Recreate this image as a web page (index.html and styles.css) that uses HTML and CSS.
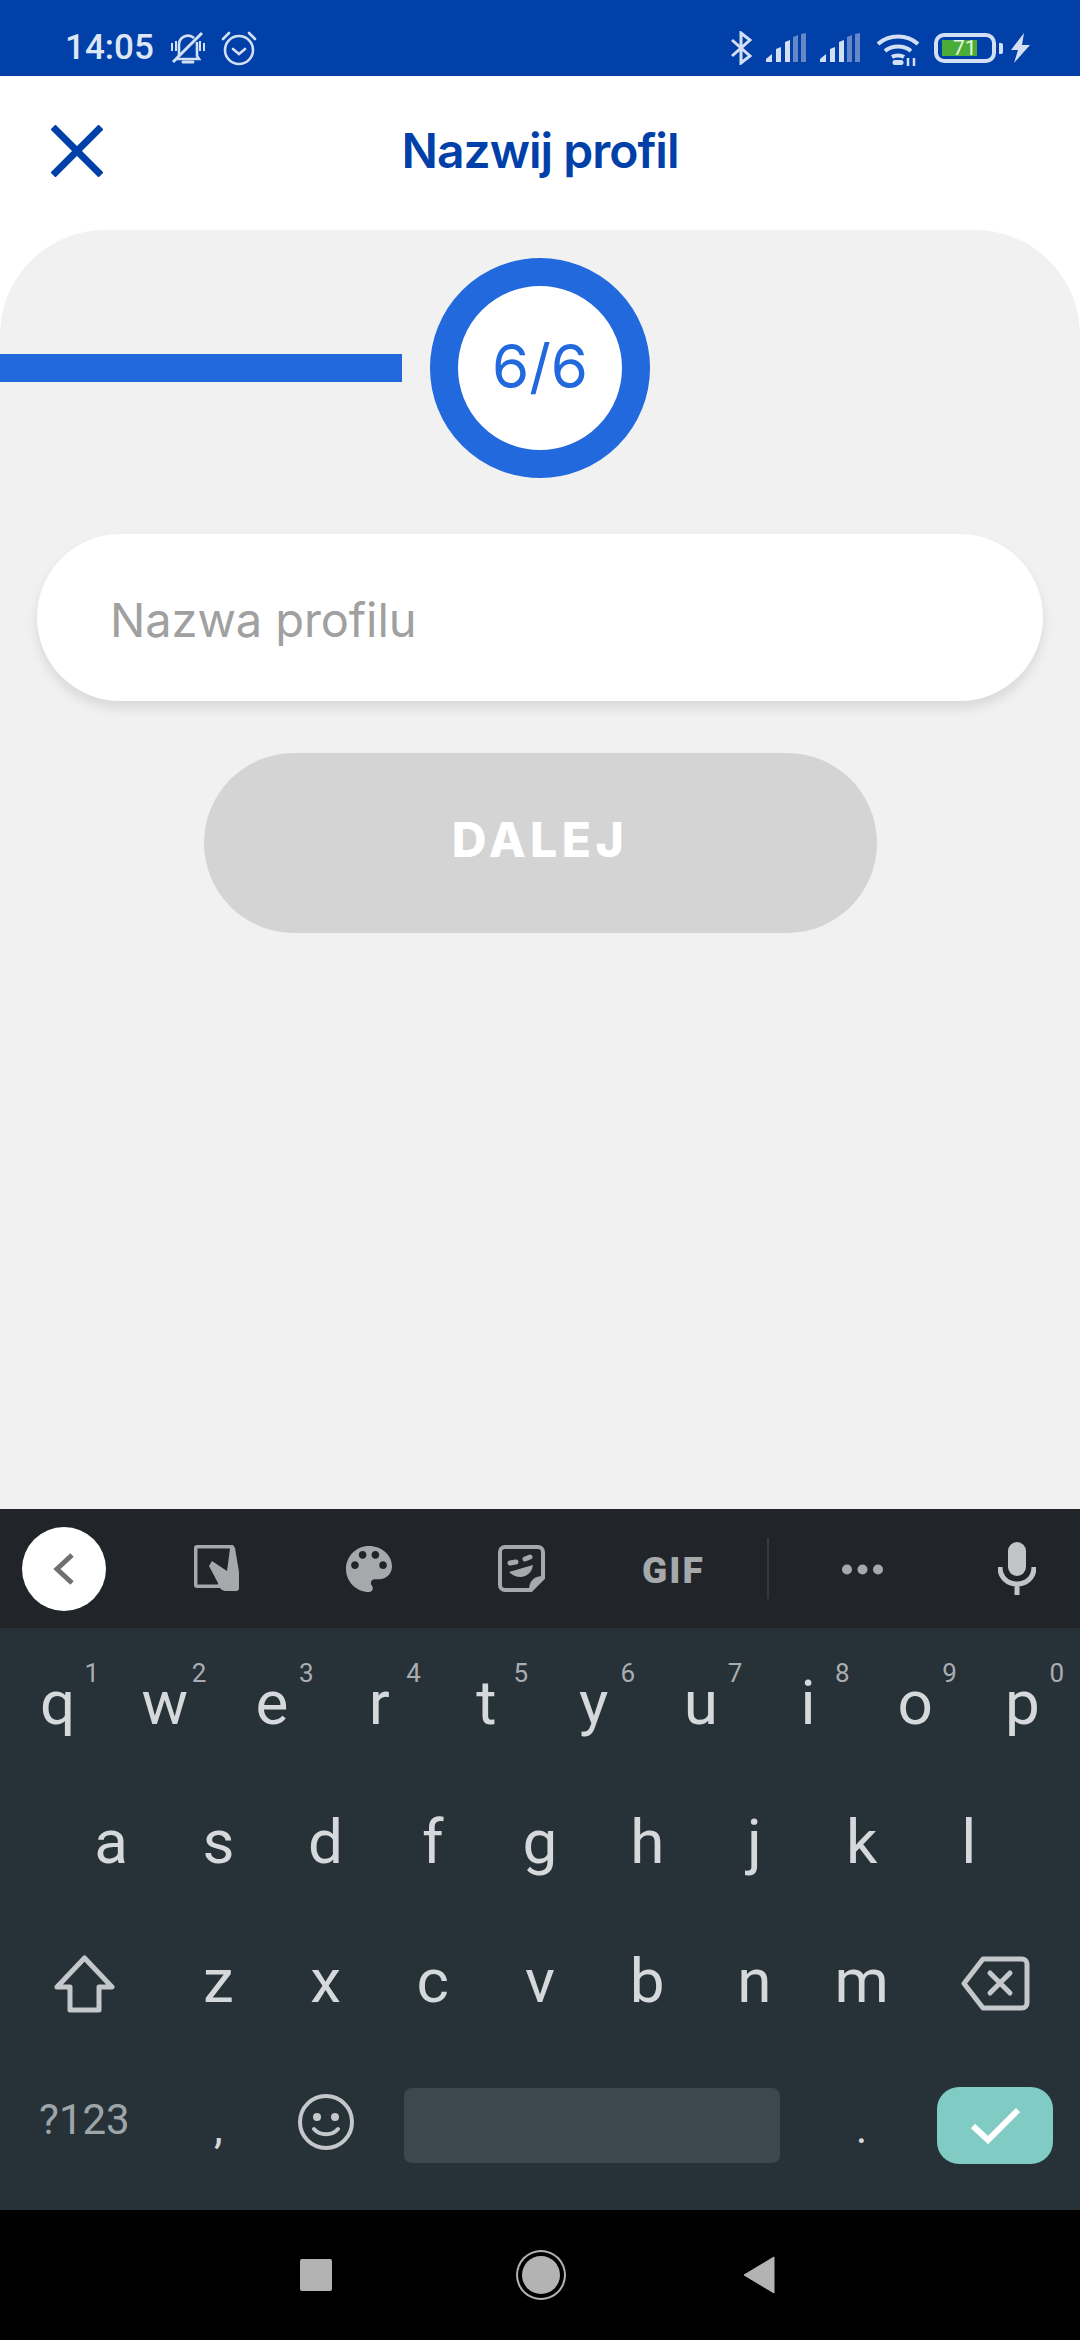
FILE: index.html
```html
<!DOCTYPE html>
<html><head>
<meta charset="utf-8">
<title>Nazwij profil</title>
<link rel="stylesheet" href="styles.css">
</head>
<body>
<div class="phone">
	<div class="status">
		<span class="clock">14:05</span>
		<svg class="ic-bell" width="34" height="34" viewBox="0 0 34 34" fill="none" stroke="#d3dff4" stroke-width="2.6"><path d="M8 25V14a9 9 0 0 1 15-7M26 11v14l2 3H5"/><path d="M12 31h10" stroke-width="3" stroke-linecap="round"/><path d="M1 12v8M5 10v10M29 10v10M33 12v8" stroke-width="2"/><path d="M2 31 31 2" stroke-width="3"/></svg>
		<svg class="ic-alarm" width="36" height="35" viewBox="0 0 36 35" fill="none" stroke="#d3dff4" stroke-width="2.6"><circle cx="18" cy="19" r="14"/><path d="M12 18l6 5 6-5M2 8l6-6M34 8l-6-6" stroke-linecap="round"/></svg>
		<span class="status-space"></span>
		<svg class="ic-bt" width="21" height="34" viewBox="0 0 21 34" fill="none" stroke="#d3dff4" stroke-width="3"><path d="M1 9l18 16-9 7V2l9 7L1 25"/></svg>
		<svg class="ic-sig" width="40" height="29" viewBox="0 0 40 29"><path d="M0 29v-3l6-5v8z" fill="#d3dff4"/><path d="M10 29V16l5-2v15zM19 29V9l5-2v22z" fill="#d3dff4"/><path d="M27 29V4l5-2v27zM35 29V1l5-1v29z" fill="#6688c9"/></svg>
		<svg class="ic-sig" width="40" height="29" viewBox="0 0 40 29"><path d="M0 29v-3l6-5v8z" fill="#d3dff4"/><path d="M10 29V16l5-2v15zM19 29V9l5-2v22z" fill="#d3dff4"/><path d="M27 29V4l5-2v27zM35 29V1l5-1v29z" fill="#6688c9"/></svg>
		<svg class="ic-wifi" width="44" height="33" viewBox="0 0 44 33" fill="none" stroke="#d3dff4" stroke-width="4"><path d="M2 11c11-10 29-10 40 0M9 18c7-6 19-6 26 0M16 24c3-2 9-2 12 0"/><path d="M19 29.500h6" stroke-width="5" stroke-linecap="round"/><path d="M32 25v8M38 25v8" stroke-width="2.500"/></svg>
		<div class="battery"><div class="battery-fill"></div><span class="battery-num">71</span></div>
		<span class="battery-nub"></span>
		<svg class="ic-bolt" width="19" height="30" viewBox="0 0 19 30"><path d="M13 0 0 17h7L3 30 19 12h-8z" fill="#d3dff4"/></svg>
	</div>

	<div class="appbar">
		<svg class="close" width="52" height="52" viewBox="0 0 52 52" fill="none" stroke="#0040a8" stroke-width="7"><path d="M2 2l48 48M50 2 2 50"/></svg>
		<h1>Nazwij profil</h1>
	</div>

	<div class="panel">
		<div class="progress">
			<div class="progress-bar"></div>
			<div class="progress-ring">6/6</div>
		</div>
		<div class="field">Nazwa profilu</div>
		<div class="next">DALEJ</div>
	</div>

	<div class="kb-tools">
		<div class="kb-back"><svg width="22" height="34" viewBox="0 0 22 34" fill="none" stroke="#6f6f6f" stroke-width="5"><path d="M19 3 4 17l15 14"/></svg></div>
		<svg class="t-clip" width="46" height="47" viewBox="0 0 46 47"><path d="M3 0H39L41 3 45 27V43Q45 46 42 46H31Q28 46 26 43H3Q0 43 0 40V3Q0 0 3 0z" fill="#a5a9ac"/><path d="M3.500 3.500H36L33 26 18 16 15 21 24 38V39.500H3.500z" fill="#212529"/></svg>
		<svg class="t-palette" width="46" height="46" viewBox="3 3 18 18"><path fill="#a5a9ac" d="M12 3c-4.970 0-9 4.030-9 9s4.030 9 9 9c.83 0 1.500-.67 1.500-1.500 0-.39-.15-.74-.39-1.010-.23-.26-.38-.61-.38-.99 0-.83.67-1.500 1.500-1.500H16c2.760 0 5-2.240 5-5 0-4.420-4.030-8-9-8zm-5.500 9c-.83 0-1.500-.67-1.500-1.500S5.670 9 6.500 9 8 9.670 8 10.500 7.330 12 6.500 12zm3-4C8.670 8 8 7.330 8 6.500S8.670 5 9.500 5s1.500.67 1.500 1.500S10.330 8 9.500 8zm5 0c-.83 0-1.500-.67-1.500-1.500S13.670 5 14.500 5s1.500.67 1.500 1.500S15.330 8 14.500 8zm3 4c-.83 0-1.500-.67-1.500-1.500S16.670 9 17.500 9s1.500.67 1.500 1.500-.67 1.500-1.500 1.500z"/></svg>
		<svg class="t-sticker" width="47" height="47" viewBox="0 0 47 47"><path d="M7 2H40a5 5 0 0 1 5 5V33L33 45H7a5 5 0 0 1-5-5V7a5 5 0 0 1 5-5z" fill="none" stroke="#a5a9ac" stroke-width="4"/><path d="M31 45c0-9 5-14 14-14z" fill="#a5a9ac"/><path d="M11 27 35 20c-1 7-5 11-12 12-5 0-9-2-12-5z" fill="#a5a9ac"/><path d="M12 18l6-1M27 14l5-2" stroke="#a5a9ac" stroke-width="5" stroke-linecap="round"/></svg>
		<span class="t-gif">GIF</span>
		<span class="t-sep"></span>
		<svg class="t-dots" width="41" height="11" viewBox="0 0 41 11" fill="#a5a9ac"><circle cx="5" cy="5.500" r="5"/><circle cx="20.500" cy="5.500" r="5"/><circle cx="36" cy="5.500" r="5"/></svg>
		<svg class="t-mic" width="38" height="53" viewBox="0 0 38 53"><rect x="10" y="0" width="18" height="34" rx="9" fill="#c2c5c8"/><path d="M2 25c0 11 8 17 17 17s17-6 17-17M19 42v11" fill="none" stroke="#c2c5c8" stroke-width="5"/></svg>
	</div>

	<div class="kb">
		<div class="kb-row">
			<div class="key">q<sup>1</sup></div><div class="key">w<sup>2</sup></div><div class="key">e<sup>3</sup></div><div class="key">r<sup>4</sup></div><div class="key">t<sup>5</sup></div><div class="key">y<sup>6</sup></div><div class="key">u<sup>7</sup></div><div class="key">i<sup>8</sup></div><div class="key">o<sup>9</sup></div><div class="key">p<sup>0</sup></div>
		</div>
		<div class="kb-row row-mid">
			<div class="key">a</div><div class="key">s</div><div class="key">d</div><div class="key">f</div><div class="key">g</div><div class="key">h</div><div class="key">j</div><div class="key">k</div><div class="key">l</div>
		</div>
		<div class="kb-row">
			<div class="key wide"><svg class="kb-ic" width="61" height="58" viewBox="0 0 61 58" fill="none" stroke="#c4c8cb" stroke-width="5" stroke-linejoin="round"><path d="M30.500 3 58 32H45V55H16V32H3z"/></svg></div>
			<div class="key">z</div><div class="key">x</div><div class="key">c</div><div class="key">v</div><div class="key">b</div><div class="key">n</div><div class="key">m</div>
			<div class="key wide"><svg class="kb-ic" width="69" height="55" viewBox="0 0 69 55" fill="none" stroke="#c4c8cb" stroke-width="5" stroke-linejoin="round"><path d="M22 3H61a5 5 0 0 1 5 5V47a5 5 0 0 1-5 5H22L3 27.500z"/><path d="M29 17 49 37M49 17 29 37" stroke-linecap="round"/></svg></div>
		</div>
		<div class="kb-row">
			<div class="key wide sym">?123</div>
			<div class="key punct">,</div>
			<div class="key"><svg class="kb-smile" width="56" height="56" viewBox="0 0 56 56" fill="none" stroke="#c4c8cb" stroke-width="4"><circle cx="28" cy="28" r="26"/><circle cx="19" cy="23" r="4" fill="#c4c8cb" stroke="none"/><circle cx="37" cy="23" r="4" fill="#c4c8cb" stroke="none"/><path d="M16 35c6 7 18 7 24 0" stroke-linecap="round"/></svg></div>
			<div class="key space-key"><span class="spacebar"></span></div>
			<div class="key punct">.</div>
			<div class="key wide"><span class="enter"><svg width="50" height="38" viewBox="0 0 50 38" fill="none" stroke="#fff" stroke-width="6"><path d="M3 19l15 14L48 3"/></svg></span></div>
		</div>
	</div>

	<div class="navbar">
		<span class="nav-square"></span>
		<span class="nav-home"></span>
		<svg class="nav-back" width="32" height="38" viewBox="0 0 32 38"><path d="M31 1v36L1 19z" fill="#b3b3b3" stroke="#b3b3b3" stroke-width="1" stroke-linejoin="round"/></svg>
	</div>
</div>
</body></html>
```

FILE: styles.css
```css
body{margin:0;background:#fff;font-family:"Roboto",sans-serif;}
.phone{width:1080px;height:2340px;display:flex;flex-direction:column;overflow:hidden;}

/* status bar */
.status{height:76px;background:#0040a8;display:flex;align-items:flex-start;padding:0 50px 0 65px;box-sizing:border-box;color:#dde6f5;flex:none;}
.clock{font-size:35px;font-weight:500;line-height:34px;margin-top:31px;width:89px;}
.status svg{display:block;}
.ic-bell{margin:31px 0 0 17px;}
.ic-alarm{margin:31px 0 0 16px;}
.status-space{flex:1;}
.ic-bt{margin-top:31px;}
.ic-sig{margin:33px 0 0 14px;}
.ic-wifi{margin:33px 0 0 16px;}
.battery{position:relative;margin:33px 0 0 14px;width:62px;height:30px;box-sizing:border-box;border:4px solid #d3dff4;border-radius:10px;}
.battery-fill{position:absolute;left:4px;top:3px;width:35px;height:16px;background:#4bad37;}
.battery-num{position:absolute;left:15px;top:0;font-size:21px;line-height:22px;color:#e8f5e2;}
.battery-nub{width:4px;height:11px;background:#d3dff4;margin:43px 0 0 3px;border-radius:0 2px 2px 0;}
.ic-bolt{margin:33px 0 0 8px;}

/* header */
.appbar{height:154px;background:#fff;display:grid;grid-template-columns:1fr auto 1fr;align-items:center;padding:0 51px;box-sizing:border-box;flex:none;}
.close{display:block;margin-bottom:4px;}
h1{margin:0 0 6px;font-family:"Inter",sans-serif;font-size:48px;font-weight:600;color:#0040a8;letter-spacing:-1px;white-space:nowrap;}

/* form */
.panel{flex:1;background:#f1f1f1;border-radius:105px 105px 0 0;padding-top:28px;box-sizing:border-box;}
.progress{display:flex;align-items:center;}
.progress-bar{width:402px;height:28px;background:#2269dd;margin-right:28px;}
.progress-ring{width:220px;height:220px;box-sizing:border-box;border:28px solid #2269dd;border-radius:50%;background:#fff;display:flex;align-items:center;justify-content:center;color:#2269dd;font-family:"Inter",sans-serif;font-size:60px;padding-bottom:4px;}
.field{margin:56px 37px 0;height:167px;background:#fff;border-radius:84px;box-shadow:0 7px 12px rgba(0,0,0,.1);padding:4px 0 0 73px;box-sizing:border-box;display:flex;align-items:center;color:#a0a0a0;font-family:"Inter",sans-serif;font-size:47px;letter-spacing:-.1px;}
.next{margin:52px auto 0;width:673px;height:180px;background:#d4d4d4;border-radius:90px;display:flex;align-items:center;justify-content:center;color:#fff;font-family:"Inter",sans-serif;font-size:48px;font-weight:800;letter-spacing:4.500px;padding-bottom:8px;box-sizing:border-box;}

/* keyboard */
.kb-tools{height:119px;background:#212529;display:flex;align-items:center;padding-left:22px;box-sizing:border-box;flex:none;}
.kb-back{width:84px;height:84px;border-radius:50%;background:#fff;display:flex;align-items:center;justify-content:center;}
.t-clip{margin-left:88px;}
.t-palette{margin-left:106px;}
.t-sticker{margin-left:106px;}
.t-gif{margin-left:97px;width:62px;font-weight:900;font-size:37px;color:#a5a9ac;letter-spacing:2px;padding-top:4px;}
.t-sep{margin-left:63px;width:2px;height:61px;background:#343a3f;}
.t-dots{margin-left:73px;margin-top:2px;}
.t-mic{margin-left:115px;}

.kb{height:582px;background:#263238;padding:5px 4px 18px;box-sizing:border-box;flex:none;}
.kb-row{display:flex;height:139px;}
.row-mid{padding:0 53.6px;}
.key{position:relative;flex:1;display:flex;align-items:center;justify-content:center;color:#d6d9dc;font-size:62px;font-weight:400;}
.key.wide{flex:1.5;}
.key sup{position:absolute;top:27px;right:12px;font-size:26px;line-height:26px;font-weight:400;color:#a9adb0;}
.kb-ic{margin-top:6px;}
.kb-smile{margin-top:4px;}
.sym{font-size:42px;font-weight:400;color:#9ea5a9;}
.punct{font-size:44px;font-weight:400;padding-top:16px;box-sizing:border-box;}
.space-key{flex:4;}
.spacebar{width:376px;height:75px;background:#3c474e;border-radius:8px;margin:12px 3px 0 0;}
.enter{width:116px;height:77px;background:#80cbc4;border-radius:22px;display:flex;align-items:center;justify-content:center;margin:12px 1px 0 0;}

/* nav */
.navbar{height:130px;background:#000;flex:none;display:flex;align-items:center;}
.nav-square{width:32px;height:32px;background:#b3b3b3;border-radius:2px;margin:0 0 0 300px;}
.nav-home{width:38px;height:38px;border-radius:50%;background:#b3b3b3;box-shadow:0 0 0 4px #000,0 0 0 6px #b3b3b3;margin-left:190px;}
.nav-back{margin-left:183px;}
```
